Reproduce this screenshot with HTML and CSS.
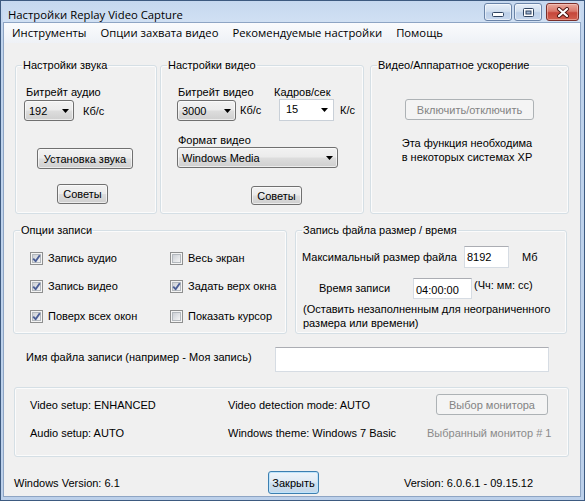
FILE: index.html
```html
<!DOCTYPE html>
<html lang="ru">
<head>
<meta charset="utf-8">
<title>Настройки Replay Video Capture</title>
<link rel="stylesheet" href="styles.css">
</head>
<body>
<svg class="defs" width="0" height="0" aria-hidden="true">
  <defs>
    <linearGradient id="cbfill" x1="0" y1="0" x2="1" y2="1">
      <stop offset="0" stop-color="#c9cdd3"/>
      <stop offset="1" stop-color="#f7f7f7"/>
    </linearGradient>
    <symbol id="cb-box" viewBox="0 0 13 13">
      <rect x="0.5" y="0.5" width="12" height="12" fill="#f4f4f4" stroke="#8e8f8f"/>
      <rect x="2.5" y="2.5" width="8" height="8" fill="url(#cbfill)" stroke="#b3b8bd"/>
    </symbol>
    <symbol id="cb-check" viewBox="0 0 13 13">
      <path d="M3.2 6.6 L5.6 9.2 L9.8 3.2" fill="none" stroke="#4c5f96" stroke-width="1.9" stroke-linejoin="round"/>
    </symbol>
    <symbol id="dd-arrow" viewBox="0 0 7 4">
      <path d="M0 0 H7 L3.5 4 Z" fill="#000"/>
    </symbol>
  </defs>
</svg>
<div class="window">
  <div class="titlebar">
    <span class="title">Настройки Replay Video Capture</span>
    <div class="caption-buttons">
      <span class="cbtn cbtn-min"><svg width="12" height="5" viewBox="0 0 12 5"><rect x="0.5" y="0.5" width="11" height="4" rx="1" fill="#fff" stroke="#2f4360"/></svg></span>
      <span class="cbtn cbtn-max"><svg width="11" height="9" viewBox="0 0 11 9"><rect x="0.5" y="0.5" width="10" height="8" rx="1" fill="#fff" stroke="#2f4360"/><rect x="3" y="3" width="5" height="3" fill="#9fb5d1" stroke="#2f4360" stroke-width="1"/></svg></span>
      <span class="cbtn cbtn-close"><svg width="14" height="11" viewBox="0 0 14 11"><path d="M3 2 L11 9 M11 2 L3 9" stroke="#4a1410" stroke-width="4" stroke-linecap="round"/><path d="M3 2 L11 9 M11 2 L3 9" stroke="#fff" stroke-width="2.2" stroke-linecap="round"/></svg></span>
    </div>
  </div>
  <div class="frame">
    <nav class="menubar">
      <span class="menu-item">Инструменты</span>
      <span class="menu-item">Опции захвата видео</span>
      <span class="menu-item">Рекомендуемые настройки</span>
      <span class="menu-item">Помощь</span>
    </nav>
    <main class="client">
      <div class="row row-top">
        <fieldset class="group g-audio">
          <legend>Настройки звука</legend>
          <div class="gbody gbody-top audio-body">
            <div class="lbl audio-lbl">Битрейт аудио</div>
            <div class="ctl-row audio-row">
              <div class="combo combo-audio"><span>192</span><svg class="arrow"><use href="#dd-arrow"/></svg></div>
              <span class="unit-audio">Кб/с</span>
            </div>
            <button class="btn btn-sound">Установка звука</button>
            <button class="btn btn-tips1">Советы</button>
          </div>
        </fieldset>
        <fieldset class="group g-video">
          <legend>Настройки видео</legend>
          <div class="gbody gbody-top video-body">
            <div class="v-labels">
              <span class="v-lbl1">Битрейт видео</span>
              <span>Кадров/сек</span>
            </div>
            <div class="ctl-row v-controls">
              <div class="combo combo-vbit"><span>3000</span><svg class="arrow"><use href="#dd-arrow"/></svg></div>
              <span class="unit-vbit">Кб/с</span>
              <div class="combo combo-edit"><span>15</span><svg class="arrow"><use href="#dd-arrow"/></svg></div>
              <span class="unit-fps">К/с</span>
            </div>
            <div class="lbl fmt-lbl">Формат видео</div>
            <div class="combo combo-fmt"><span>Windows Media</span><svg class="arrow"><use href="#dd-arrow"/></svg></div>
            <button class="btn btn-tips2">Советы</button>
          </div>
        </fieldset>
        <fieldset class="group g-hw">
          <legend>Видео/Аппаратное ускорение</legend>
          <div class="gbody gbody-top hw-body">
            <button class="btn btn-disabled btn-toggle" disabled>Включить/отключить</button>
            <p class="hw-note">Эта функция необходима<br>в некоторых системах XP</p>
          </div>
        </fieldset>
      </div>

      <div class="row row-mid">
        <fieldset class="group g-rec">
          <legend>Опции записи</legend>
          <div class="gbody gbody-mid checks">
            <label class="chk"><svg class="cb"><use href="#cb-box"/><use href="#cb-check"/></svg>Запись аудио</label>
            <label class="chk"><svg class="cb"><use href="#cb-box"/></svg>Весь экран</label>
            <label class="chk"><svg class="cb"><use href="#cb-box"/><use href="#cb-check"/></svg>Запись видео</label>
            <label class="chk"><svg class="cb"><use href="#cb-box"/><use href="#cb-check"/></svg>Задать верх окна</label>
            <label class="chk"><svg class="cb"><use href="#cb-box"/><use href="#cb-check"/></svg>Поверх всех окон</label>
            <label class="chk"><svg class="cb"><use href="#cb-box"/></svg>Показать курсор</label>
          </div>
        </fieldset>
        <fieldset class="group g-file">
          <legend>Запись файла размер / время</legend>
          <div class="gbody gbody-mid file-body">
            <div class="size-row">
              <span class="size-lbl">Максимальный размер файла</span>
              <span class="textbox tb-size">8192</span>
              <span class="unit-mb">Мб</span>
            </div>
            <div class="time-row">
              <span class="time-lbl">Время записи</span>
              <span class="textbox tb-time">04:00:00</span>
              <span class="time-fmt">(Чч: мм: сс)</span>
            </div>
            <p class="file-note">(Оставить незаполненным для неограниченного<br>размера или времени)</p>
          </div>
        </fieldset>
      </div>

      <div class="row name-row">
        <span class="name-lbl">Имя файла записи (например - Моя запись)</span>
        <span class="textbox tb-name"></span>
      </div>

      <div class="info-box">
        <span>Video setup: ENHANCED</span>
        <span>Video detection mode: AUTO</span>
        <button class="btn btn-disabled btn-monitor" disabled>Выбор монитора</button>
        <span>Audio setup: AUTO</span>
        <span>Windows theme: Windows 7 Basic</span>
        <span class="muted">Выбранный монитор # 1</span>
      </div>

      <div class="row footer">
        <span class="winver">Windows Version: 6.1</span>
        <button class="btn btn-default">Закрыть</button>
        <span class="appver">Version: 6.0.6.1 - 09.15.12</span>
      </div>
    </main>
  </div>
</div>
</body>
</html>
```

FILE: styles.css
```css
* { box-sizing: border-box; }
html, body { margin: 0; padding: 0; }
body {
  width: 585px;
  height: 501px;
  overflow: hidden;
  font-family: "Liberation Sans", Arial, sans-serif;
  font-size: 11px;
  line-height: 14px;
  color: #000;
  background: #fff;
}
.defs { position: absolute; width: 0; height: 0; overflow: hidden; }

/* window frame */
.window {
  width: 585px;
  height: 501px;
  display: flex;
  flex-direction: column;
  border: 1px solid #3d5a80;
  background: linear-gradient(#c9daf0, #bfd3ec 40px, #bcd0ea);
  padding: 0 3px 3px 2px;
}
.titlebar {
  height: 21px;
  flex: none;
  display: flex;
  justify-content: space-between;
  align-items: flex-start;
  background: linear-gradient(#c6d8ef, #d0e0f3);
}
.title {
  font-family: "Open Sans", "Noto Sans", sans-serif;
  font-size: 11.3px;
  line-height: 16px;
  padding: 6px 0 0 5px;
  color: #000;
}
.caption-buttons { display: flex; margin: 2px 2px 0 0; }
.cbtn {
  height: 18px;
  display: flex;
  align-items: center;
  justify-content: center;
  border: 1px solid #6a84a8;
  border-radius: 3px;
  background: linear-gradient(#e6eef8, #d3e0f0 45%, #bccfe8 55%, #c8d8ee);
  box-shadow: inset 0 0 0 1px rgba(255,255,255,0.55);
}
.cbtn-min { width: 28px; margin-right: 2px; padding-top: 5px; }
.cbtn-max { width: 28px; margin-right: 4px; }
.cbtn-close {
  width: 33px;
  border-color: #7a2f2a;
  background: linear-gradient(#e9a99c, #d9796c 45%, #c6463a 55%, #d2604f);
  box-shadow: inset 0 0 0 1px rgba(255,220,210,0.45);
}

.frame {
  flex: 1;
  display: flex;
  flex-direction: column;
  border: 1px solid #8ea5c4;
}
.menubar {
  height: 20px;
  flex: none;
  display: flex;
  align-items: center;
  padding-left: 1px;
  background: linear-gradient(#fafbfd, #eef1f6);
  font-family: "Open Sans", "Noto Sans", sans-serif;
  font-size: 11.25px;
}
.menu-item { padding: 0 7px; line-height: 18px; }

.client {
  flex: 1;
  display: flex;
  flex-direction: column;
  background: #f0f0f0;
}
.row { display: flex; }

/* group boxes */
.group {
  margin: 0;
  padding: 0;
  min-width: 0;
  border: 1px solid #d5dfe5;
  border-radius: 3px;
  box-shadow: inset 0 0 0 1px #fbfbfb;
}
.group legend {
  margin-left: 6px;
  padding: 0 1px;
  line-height: 14px;
}
.gbody { display: flex; flex-direction: column; align-items: flex-start; }
.gbody-top { height: 141px; }
.gbody-mid { height: 96px; }

.row-top { margin: 15px 0 0 11px; }
.g-audio { width: 142px; }
.g-video { width: 204px; margin-left: 3px; }
.g-hw { width: 199px; margin-left: 6px; }

.row-mid { margin: 9px 0 0 9px; }
.g-rec { width: 274px; }
.g-file { width: 272px; margin-left: 8px; }

/* controls */
.btn {
  font: inherit;
  color: #000;
  padding: 0;
  height: 21px;
  border: 1px solid #707070;
  border-radius: 3px;
  background: linear-gradient(#f2f2f2, #ebebeb 48%, #dddddd 52%, #cfcfcf);
  box-shadow: inset 0 0 0 1px rgba(255,255,255,0.6);
}
.btn-disabled {
  color: #838383;
  border-color: #adb2b5;
  background: #f4f4f4;
  box-shadow: none;
}
.btn-default {
  border-color: #3c7fb1;
  background: linear-gradient(#eef5fb, #dfeaf4 48%, #cfe0ef 52%, #c3d8ea);
  box-shadow: inset 0 0 0 1px #bfe4fb;
}

.combo {
  display: flex;
  align-items: center;
  justify-content: space-between;
  height: 21px;
  padding: 0 4px;
  border: 1px solid #707070;
  border-radius: 3px;
  background: linear-gradient(#f2f2f2, #ebebeb 48%, #dddddd 52%, #cfcfcf);
  box-shadow: inset 0 0 0 1px rgba(255,255,255,0.6);
}
.arrow { width: 7px; height: 4px; flex: none; }
.combo-edit {
  border-radius: 0;
  border-color: #c9d0d8;
  background: #fff;
  box-shadow: none;
  align-items: flex-start;
  padding: 2px 5px 0 6px;
}
.combo-edit .arrow { margin-top: 6px; }

.textbox {
  display: block;
  background: #fff;
  border: 1px solid #d6dce3;
  border-top-color: #abadb3;
  padding: 0 2px;
}

/* audio box */
.audio-body { padding-left: 8px; }
.audio-lbl { margin: 13px 0 0 2px; }
.ctl-row { display: flex; align-items: center; }
.audio-row { margin-top: 1px; }
.combo-audio { width: 50px; }
.unit-audio { margin-left: 9px; }
.btn-sound { width: 96px; margin: 27px 0 0 13px; }
.btn-tips1 { width: 51px; height: 20px; margin: 15px 0 0 33px; }

/* video box */
.video-body { padding-left: 16px; }
.v-labels { display: flex; margin: 13px 0 0 1px; }
.v-lbl1 { width: 96px; }
.v-controls { margin-top: 0; align-items: center; }
.combo-vbit { width: 59px; margin-top: 1px; }
.unit-vbit { width: 43px; padding-left: 4px; }
.combo-edit { width: 55px; height: 22px; }
.unit-fps { margin-left: 6px; }
.fmt-lbl { margin: 13px 0 0 1px; line-height: 13px; }
.combo-fmt { width: 161px; }
.btn-tips2 { width: 51px; height: 19px; margin: 18px 0 0 74px; }

/* hardware box */
.hw-body { align-items: stretch; }
.btn-toggle { width: 129px; margin: 27px 0 0 34px; }
.hw-note { margin: 16px 0 0; padding-right: 5px; text-align: center; }

/* record options */
.checks {
  display: grid;
  grid-template-columns: 140px 1fr;
  grid-template-rows: 28px 30px 14px;
  align-items: start;
  padding: 14px 0 0 16px;
}
.chk { display: flex; align-items: center; gap: 5px; height: 14px; }
.cb { width: 13px; height: 13px; flex: none; }

/* file size / time */
.size-row { display: flex; align-items: center; height: 22px; margin-top: 9px; }
.size-lbl { width: 162px; margin-left: 6px; }
.tb-size { width: 45px; height: 22px; line-height: 20px; }
.unit-mb { margin-left: 13px; }
.time-row { display: flex; align-items: flex-start; height: 21px; margin-top: 10px; }
.time-lbl { width: 94px; margin: 3px 0 0 23px; }
.tb-time { width: 59px; height: 21px; padding-top: 4px; line-height: 14px; }
.time-fmt { margin-left: 2px; }
.file-note { margin: 3px 0 0 7px; }

/* file name */
.name-row { margin: 13px 0 0 0; align-items: flex-start; }
.name-lbl { width: 271px; padding-left: 22px; margin-top: 3px; }
.tb-name { width: 274px; height: 25px; }

/* info box */
.info-box {
  margin: 15px 0 0 10px;
  width: 555px;
  height: 70px;
  border: 1px solid #d5dfe5;
  border-radius: 3px;
  box-shadow: inset 0 0 0 1px #fbfbfb;
  display: grid;
  grid-template-columns: 198px 199px 1fr;
  grid-template-rows: 21px 21px;
  row-gap: 7px;
  align-items: center;
  padding: 6px 0 0 15px;
}
.btn-monitor { width: 112px; margin-left: 9px; }
.muted { color: #8a8a8a; }

/* footer */
.footer { margin-top: 14px; align-items: center; }
.winver { width: 264px; padding-left: 10px; }
.btn-default { width: 51px; height: 23px; }
.appver { margin-left: 85px; }
```
